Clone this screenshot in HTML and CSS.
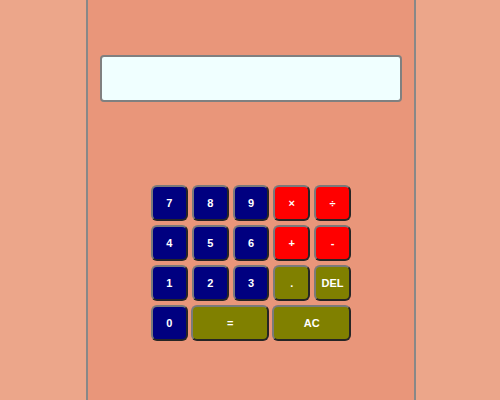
FILE: index.html
```html
<!DOCTYPE html>
<html>
<head>
<meta charset="utf-8">
<link rel="stylesheet" href="styles.css">
</head>
<body>
<div class="calc">
  <div class="display"></div>
  <div class="keys">
    <button class="key num">7</button>
    <button class="key num">8</button>
    <button class="key num">9</button>
    <button class="key op">×</button>
    <button class="key op">÷</button>
    <button class="key num">4</button>
    <button class="key num">5</button>
    <button class="key num">6</button>
    <button class="key op">+</button>
    <button class="key op">-</button>
    <button class="key num">1</button>
    <button class="key num">2</button>
    <button class="key num">3</button>
    <button class="key fn">.</button>
    <button class="key fn">DEL</button>
    <button class="key num">0</button>
    <button class="key fn wide">=</button>
    <button class="key fn wide">AC</button>
  </div>
</div>
</body>
</html>
```

FILE: styles.css
```css
html, body {
  margin: 0;
  padding: 0;
}
body {
  background: #eca68a;
  font-family: "Liberation Sans", Arial, sans-serif;
}
.calc {
  width: 330px;
  height: 400px;
  margin-left: 86px;
  border-left: 2px solid #888;
  border-right: 2px solid #888;
  background: #e9967a;
  padding-top: 55px;
  box-sizing: border-box;
  display: flex;
  flex-direction: column;
  align-items: center;
}
.display {
  width: 302px;
  height: 47px;
  box-sizing: border-box;
  background: #f0ffff;
  border: 2px solid #808080;
  border-radius: 4px;
}
.keys {
  margin-top: 83px;
  width: 200px;
  display: grid;
  grid-template-columns: repeat(5, 1fr);
  grid-auto-rows: 36px;
  gap: 4px;
}
.key {
  margin: 0;
  padding: 0;
  border: 2px outset #7a7a7a;
  border-radius: 6px;
  color: #fff;
  font-family: "Liberation Sans", Arial, sans-serif;
  font-weight: bold;
  font-size: 11px;
}
.num { background: #000080; }
.op { background: #ff0000; }
.fn { background: #808000; }
.wide { grid-column: span 2; margin-left: -1px; }
```
